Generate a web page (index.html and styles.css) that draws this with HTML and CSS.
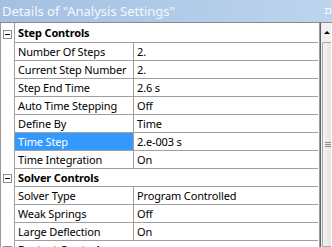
FILE: index.html
```html
<!DOCTYPE html>
<html lang="en">

<head>
    <meta charset="UTF-8">
    <title>Details of "Analysis Settings"</title>
    <link rel="stylesheet" href="styles.css">
</head>

<body>
    <div class="panel">
        <!-- Title bar -->
        <div class="title">
            <span class="title-text">Details of "Analysis Settings"</span>
            <svg class="pin" width="8" height="10" viewBox="0 0 8 10">
                <path d="M0.5 2.5 H6.5 V7.5 H0.5 M2.5 2.5 V7.5 M6.5 5 H8" fill="none" stroke="#f4f8fc" stroke-width="1" />
            </svg>
        </div>

        <div class="body">
            <!-- Property grid -->
            <div class="grid">
                <div class="row group first">
                    <div class="gutter"><span class="toggle"></span></div>
                    <div class="group-name">Step Controls</div>
                </div>
                <div class="row">
                    <div class="gutter"></div>
                    <div class="name">Number Of Steps</div>
                    <div class="value">2.</div>
                </div>
                <div class="row">
                    <div class="gutter"></div>
                    <div class="name">Current Step Number</div>
                    <div class="value">2.</div>
                </div>
                <div class="row">
                    <div class="gutter"></div>
                    <div class="name">Step End Time</div>
                    <div class="value">2.6 s</div>
                </div>
                <div class="row">
                    <div class="gutter"></div>
                    <div class="name">Auto Time Stepping</div>
                    <div class="value">Off</div>
                </div>
                <div class="row">
                    <div class="gutter"></div>
                    <div class="name">Define By</div>
                    <div class="value">Time</div>
                </div>
                <div class="row">
                    <div class="gutter"></div>
                    <div class="name selected">Time Step</div>
                    <div class="value">2.e-003 s</div>
                </div>
                <div class="row">
                    <div class="gutter"></div>
                    <div class="name">Time Integration</div>
                    <div class="value">On</div>
                </div>
                <div class="row group">
                    <div class="gutter"><span class="toggle"></span></div>
                    <div class="group-name">Solver Controls</div>
                </div>
                <div class="row">
                    <div class="gutter"></div>
                    <div class="name">Solver Type</div>
                    <div class="value">Program Controlled</div>
                </div>
                <div class="row">
                    <div class="gutter"></div>
                    <div class="name">Weak Springs</div>
                    <div class="value">Off</div>
                </div>
                <div class="row">
                    <div class="gutter"></div>
                    <div class="name">Large Deflection</div>
                    <div class="value">On</div>
                </div>
                <div class="row group">
                    <div class="gutter"><span class="toggle"></span></div>
                    <div class="group-name">Restart Controls</div>
                </div>
            </div>

            <!-- Scrollbar -->
            <div class="scrollbar">
                <div class="arrow"></div>
                <div class="thumb">
                    <span class="grip"></span>
                </div>
            </div>
        </div>
    </div>
</body>

</html>
```

FILE: styles.css
```css
/* Global */
body {
    margin: 0;
    background-color: #ffffff;
    font-family: 'Noto Sans', 'Liberation Sans', sans-serif;
    color: #000;
    overflow: hidden;
}

.panel {
    width: 332px;
    height: 247px;
    overflow: hidden;
}

/* Title bar */
.title {
    height: 22px;
    border-bottom: 1px solid #8a8a8a;
    background: linear-gradient(to right, #a3c0e2, #bdd4ed);
    display: flex;
    align-items: center;
    justify-content: space-between;
    padding-left: 2px;
}

.title-text {
    font-size: 13px;
    color: #f4f8fc;
    white-space: nowrap;
}

/* Grid */
.body {
    display: flex;
}

.grid {
    width: 320px;
    border-left: 1px solid #9a9a9a;
    border-right: 1px solid #9a9a9a;
    box-sizing: border-box;
    padding-right: 1px;
}

.row {
    display: flex;
    height: 18px;
    font-size: 11px;
    line-height: 17px;
    letter-spacing: -0.15px;
}

.row.first {
    height: 20px;
}

.row.first .group-name {
    line-height: 19px;
}

.gutter {
    width: 13px;
    border-right: 1px solid #a0a0a0;
    flex-shrink: 0;
    position: relative;
}

.toggle {
    position: absolute;
    left: 2px;
    top: 5px;
    width: 7px;
    height: 7px;
    border: 1px solid #8c8c8c;
    background: #fff;
}

.toggle::after {
    content: "";
    position: absolute;
    left: 1px;
    top: 3px;
    width: 5px;
    height: 1px;
    background: #000;
}

.row.first .toggle {
    top: 7px;
}

.name {
    width: 115px;
    padding-left: 3px;
    border-right: 1px solid #a0a0a0;
    border-bottom: 1px solid #a0a0a0;
    white-space: nowrap;
    overflow: hidden;
    flex-shrink: 0;
}

.name.selected {
    background-color: #3399ff;
    color: #fff;
}

.value {
    flex: 1;
    padding-left: 3px;
    border-bottom: 1px solid #a0a0a0;
    white-space: nowrap;
    overflow: hidden;
}

.group-name {
    flex: 1;
    padding-left: 3px;
    font-weight: bold;
    border-bottom: 1px solid #a0a0a0;
}

/* Scrollbar */
.scrollbar {
    width: 11px;
    height: 224px;
    background-color: #f0f0f0;
    border-left: 1px solid #606060;
    box-sizing: border-box;
}

.arrow {
    height: 19px;
    position: relative;
}

.arrow::after {
    content: "";
    position: absolute;
    left: 3px;
    top: 8px;
    border-left: 3px solid transparent;
    border-right: 3px solid transparent;
    border-bottom: 3px solid #000;
}

.thumb {
    height: 203px;
    margin-left: 1px;
    border: 1px solid #a8a8a8;
    border-right: none;
    border-radius: 2px 0 0 2px;
    background: linear-gradient(to right, #f4f4f4, #e4e4e4);
    position: relative;
}

.grip {
    position: absolute;
    left: 2px;
    top: 99px;
    width: 6px;
    height: 5px;
    background: repeating-linear-gradient(to bottom, #8a8a8a 0, #8a8a8a 1px, transparent 1px, transparent 2px);
}
```
